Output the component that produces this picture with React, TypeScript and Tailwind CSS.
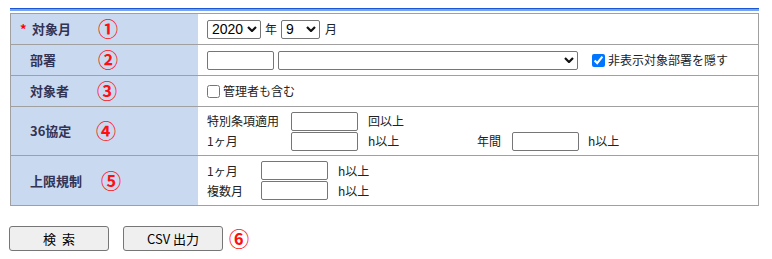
import React from "react";

const jp = "font-['Noto_Sans_CJK_JP',sans-serif]";

function Chevron() {
    return (
        <svg width="10" height="6" viewBox="0 0 10 6" className="shrink-0">
            <path d="M1 1 L5 5 L9 1" fill="none" stroke="#111" strokeWidth="2.2" />
        </svg>
    );
}

function Select({ value, width }: { value: string; width: string }) {
    return (
        <div className={`relative h-[19px] ${width}`}>
            <select
                defaultValue={value}
                className="appearance-none w-full h-full border border-[#767676] rounded-[2px] bg-white pl-[4px] text-[14px] leading-[17px] text-black font-['Liberation_Sans',sans-serif]"
            >
                <option value={value}>{value}</option>
            </select>
            <div className="absolute right-[4px] top-[6px] pointer-events-none">
                <Chevron />
            </div>
        </div>
    );
}

function Input() {
    return <input type="text" className="w-[67px] h-[19px] border border-[#767676] rounded-[2px] bg-white" />;
}

function Mark({ n, className = "" }: { n: string; className?: string }) {
    return <span className={`text-[20px] leading-none font-bold text-[#ff1010] ${className}`}>{n}</span>;
}

function Label({ text, width, mark, required }: { text: string; width: string; mark: string; required?: boolean }) {
    return (
        <div className={`w-[187px] shrink-0 bg-[#c9daf0] flex items-center ${required ? "pl-[9px]" : "pl-[19px]"}`}>
            {required && <span className="w-[12px] text-[13px] font-bold text-[#ff0000]">*</span>}
            <span className={`${width} text-[13px] font-bold text-[#333355]`}>{text}</span>
            <Mark n={mark} />
        </div>
    );
}

export default function App() {
    return (
        <div className={`pt-[8px] pl-[10px] bg-white min-h-[259px] text-[12px] text-[#222] ${jp}`}>
            <div className="w-[749px]">
                {/* Top bar */}
                <div className="h-[3px] border-t border-[#1a56d6] bg-[#78a4ea]" />

                <div className="mt-[2px] border border-[#a0a0a0] divide-y divide-[#a0a0a0]">
                    {/* 対象月 */}
                    <div className="flex h-[31px]">
                        <Label text="対象月" width="w-[66px]" mark="①" required />
                        <div className="flex items-center pl-[9px]">
                            <Select value="2020" width="w-[54px]" />
                            <span className="ml-[4px] text-[12px]">年</span>
                            <div className="ml-[4px]">
                                <Select value="9" width="w-[39px]" />
                            </div>
                            <span className="ml-[5px] text-[12px]">月</span>
                        </div>
                    </div>

                    {/* 部署 */}
                    <div className="flex h-[31px]">
                        <Label text="部署" width="w-[68px]" mark="②" />
                        <div className="flex items-center pl-[9px]">
                            <Input />
                            <div className="ml-[4px]">
                                <Select value="" width="w-[300px]" />
                            </div>
                            <label className="ml-[14px] flex items-center gap-[3px] text-[12px]">
                                <input type="checkbox" defaultChecked className="w-[13px] h-[13px]" />
                                非表示対象部署を隠す
                            </label>
                        </div>
                    </div>

                    {/* 対象者 */}
                    <div className="flex h-[31px]">
                        <Label text="対象者" width="w-[67px]" mark="③" />
                        <div className="flex items-center pl-[9px]">
                            <label className="flex items-center gap-[3px] text-[12px]">
                                <input type="checkbox" className="w-[13px] h-[13px]" />
                                管理者も含む
                            </label>
                        </div>
                    </div>

                    {/* 36協定 */}
                    <div className="flex h-[49px]">
                        <Label text="36協定" width="w-[66px]" mark="④" />
                        <div className="flex flex-col justify-center gap-[1px] pl-[9px]">
                            <div className="flex items-center h-[19px]">
                                <span className="w-[84px]">特別条項適用</span>
                                <Input />
                                <span className="ml-[10px]">回以上</span>
                            </div>
                            <div className="flex items-center h-[19px]">
                                <span className="w-[84px]">1ヶ月</span>
                                <Input />
                                <span className="ml-[10px] w-[109px]">h以上</span>
                                <span className="w-[35px]">年間</span>
                                <Input />
                                <span className="ml-[9px]">h以上</span>
                            </div>
                        </div>
                    </div>

                    {/* 上限規制 */}
                    <div className="flex h-[49px]">
                        <Label text="上限規制" width="w-[71px]" mark="⑤" />
                        <div className="flex flex-col justify-center gap-[1px] pl-[9px]">
                            <div className="flex items-center h-[19px]">
                                <span className="w-[54px]">1ヶ月</span>
                                <Input />
                                <span className="ml-[10px]">h以上</span>
                            </div>
                            <div className="flex items-center h-[19px]">
                                <span className="w-[54px]">複数月</span>
                                <Input />
                                <span className="ml-[10px]">h以上</span>
                            </div>
                        </div>
                    </div>
                </div>
            </div>

            {/* Buttons */}
            <div className="flex items-center mt-[20px] -ml-[1px]">
                <button className="w-[100px] h-[25px] border border-[#767676] rounded-[3px] bg-[#efefef] text-[13px] text-black">
                    検&nbsp;&nbsp;索
                </button>
                <button className="ml-[14px] w-[100px] h-[25px] border border-[#767676] rounded-[3px] bg-[#efefef] text-[13px] text-black">
                    CSV 出力
                </button>
                <Mark n="⑥" className="ml-[6px]" />
            </div>
        </div>
    );
}
